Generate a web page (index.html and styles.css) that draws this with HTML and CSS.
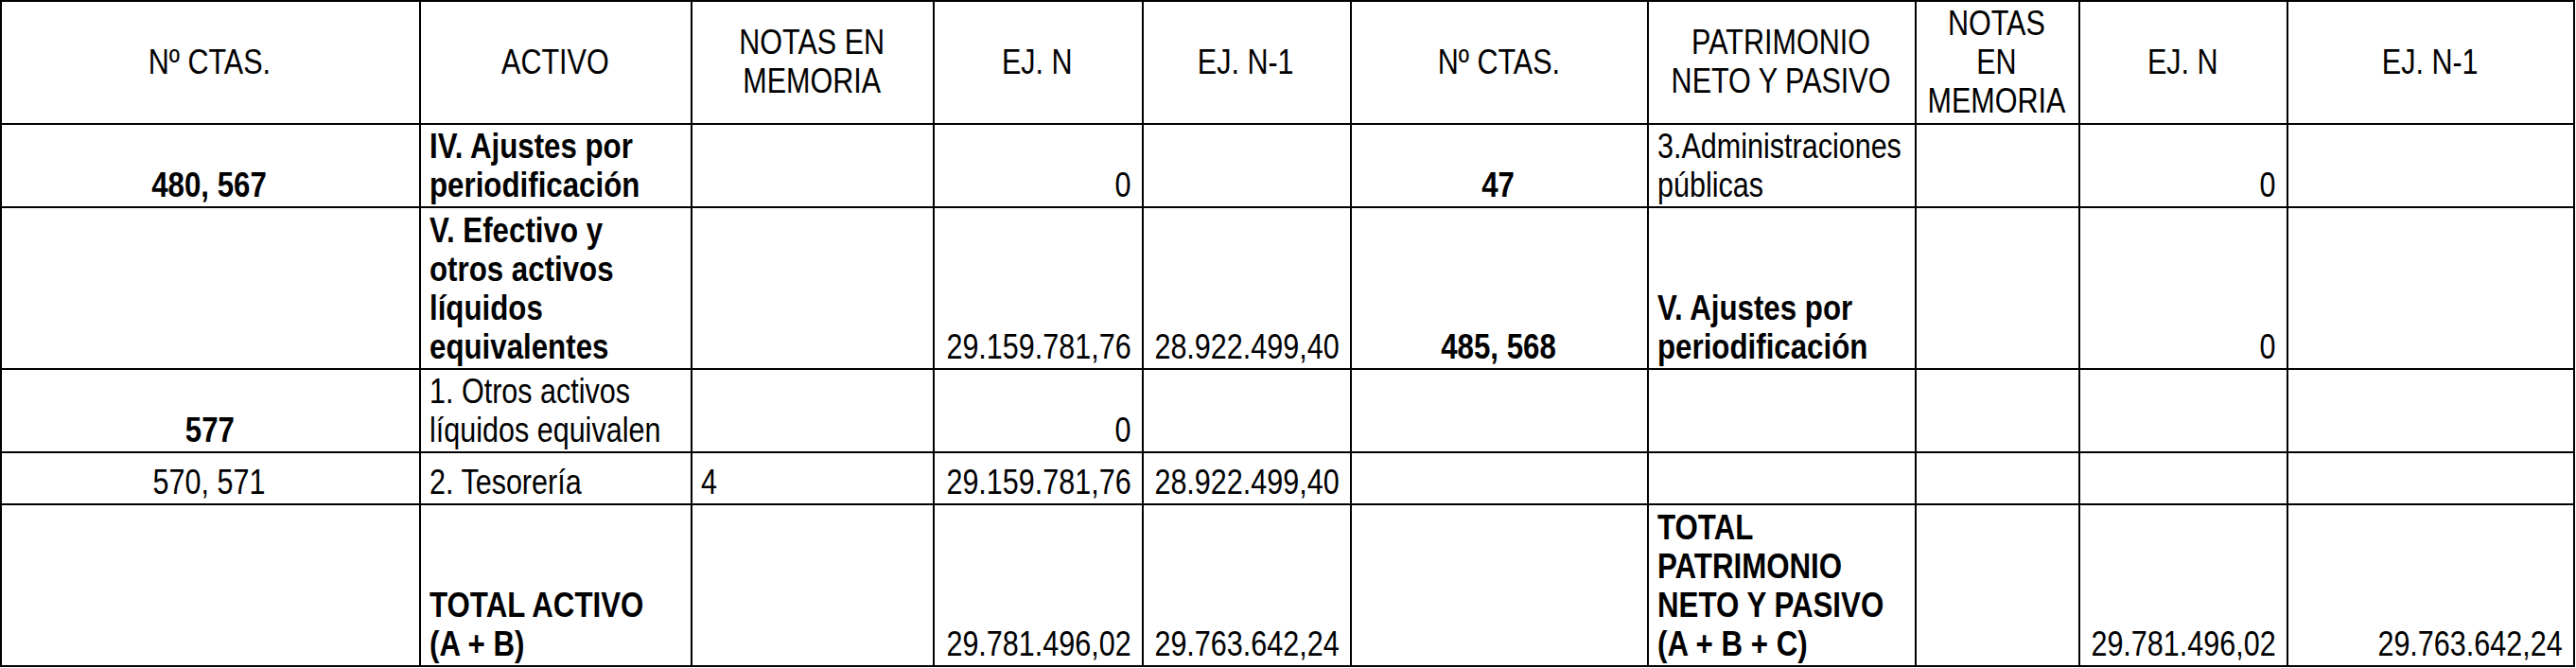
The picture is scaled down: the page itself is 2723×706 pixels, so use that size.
FILE: index.html
```html
<!DOCTYPE html>
<html lang="es">
<head>
<meta charset="utf-8">
<title>Balance</title>
<link rel="stylesheet" href="styles.css">
</head>
<body>
<table class="sheet">
  <colgroup>
    <col class="w-ctas-a">
    <col class="w-activo">
    <col class="w-notas-a">
    <col class="w-ejn-a">
    <col class="w-ejn1-a">
    <col class="w-ctas-p">
    <col class="w-pasivo">
    <col class="w-notas-p">
    <col class="w-ejn-p">
    <col class="w-ejn1-p">
  </colgroup>
  <thead>
    <tr class="r-head">
      <th><div class="cell c"><span class="t">Nº CTAS.</span></div></th>
      <th><div class="cell c"><span class="t">ACTIVO</span></div></th>
      <th><div class="cell c"><span class="t">NOTAS EN<br>MEMORIA</span></div></th>
      <th><div class="cell c"><span class="t">EJ. N</span></div></th>
      <th><div class="cell c"><span class="t">EJ. N-1</span></div></th>
      <th><div class="cell c"><span class="t">Nº CTAS.</span></div></th>
      <th><div class="cell c"><span class="t">PATRIMONIO<br>NETO Y PASIVO</span></div></th>
      <th><div class="cell c"><span class="t">NOTAS<br>EN<br>MEMORIA</span></div></th>
      <th><div class="cell c"><span class="t">EJ. N</span></div></th>
      <th><div class="cell c"><span class="t">EJ. N-1</span></div></th>
    </tr>
  </thead>
  <tbody>
    <tr class="r-1">
      <td><div class="cell c b"><span class="t">480, 567</span></div></td>
      <td><div class="cell l b"><span class="t">IV. Ajustes por<br>periodificación</span></div></td>
      <td></td>
      <td><div class="cell r"><span class="t">0</span></div></td>
      <td></td>
      <td><div class="cell c b"><span class="t">47</span></div></td>
      <td><div class="cell l"><span class="t">3.Administraciones<br>públicas</span></div></td>
      <td></td>
      <td><div class="cell r"><span class="t">0</span></div></td>
      <td></td>
    </tr>
    <tr class="r-2">
      <td></td>
      <td><div class="cell l b"><span class="t">V. Efectivo y<br>otros activos<br>líquidos<br>equivalentes</span></div></td>
      <td></td>
      <td><div class="cell r"><span class="t">29.159.781,76</span></div></td>
      <td><div class="cell r"><span class="t">28.922.499,40</span></div></td>
      <td><div class="cell c b"><span class="t">485, 568</span></div></td>
      <td><div class="cell l b"><span class="t">V. Ajustes por<br>periodificación</span></div></td>
      <td></td>
      <td><div class="cell r"><span class="t">0</span></div></td>
      <td></td>
    </tr>
    <tr class="r-3">
      <td><div class="cell c b"><span class="t">577</span></div></td>
      <td><div class="cell l"><span class="t">1. Otros activos<br>líquidos equivalen</span></div></td>
      <td></td>
      <td><div class="cell r"><span class="t">0</span></div></td>
      <td></td>
      <td></td>
      <td></td>
      <td></td>
      <td></td>
      <td></td>
    </tr>
    <tr class="r-4">
      <td><div class="cell c"><span class="t">570, 571</span></div></td>
      <td><div class="cell l"><span class="t">2. Tesorería</span></div></td>
      <td><div class="cell l"><span class="t">4</span></div></td>
      <td><div class="cell r"><span class="t">29.159.781,76</span></div></td>
      <td><div class="cell r"><span class="t">28.922.499,40</span></div></td>
      <td></td>
      <td></td>
      <td></td>
      <td></td>
      <td></td>
    </tr>
    <tr class="r-5">
      <td></td>
      <td><div class="cell l b"><span class="t">TOTAL ACTIVO<br>(A + B)</span></div></td>
      <td></td>
      <td><div class="cell r"><span class="t">29.781.496,02</span></div></td>
      <td><div class="cell r"><span class="t">29.763.642,24</span></div></td>
      <td></td>
      <td><div class="cell l b"><span class="t">TOTAL<br>PATRIMONIO<br>NETO Y PASIVO<br>(A + B + C)</span></div></td>
      <td></td>
      <td><div class="cell r"><span class="t">29.781.496,02</span></div></td>
      <td><div class="cell r"><span class="t">29.763.642,24</span></div></td>
    </tr>
  </tbody>
</table>
</body>
</html>
```
FILE: styles.css
```css
html, body {
  margin: 0;
  padding: 0;
  background: #ffffff;
}

.sheet {
  border-collapse: collapse;
  table-layout: fixed;
  width: 2722px;
  font-family: "Liberation Sans", Arial, sans-serif;
  font-size: 37px;
  line-height: 41px;
  color: #000000;
  border: 2px solid #3a3a3a;
}

.w-ctas-a { width: 443px; }
.w-activo { width: 287px; }
.w-notas-a { width: 256px; }
.w-ejn-a { width: 221px; }
.w-ejn1-a { width: 220px; }
.w-ctas-p { width: 314px; }
.w-pasivo { width: 283px; }
.w-notas-p { width: 173px; }
.w-ejn-p { width: 220px; }
.w-ejn1-p { width: 303px; }

.sheet th,
.sheet td {
  border: 2px solid #000000;
  padding: 0 11px 2px 9px;
  white-space: nowrap;
}

.sheet th {
  font-weight: normal;
  vertical-align: middle;
}

.sheet td {
  vertical-align: bottom;
}

.r-head { height: 130px; }
.r-1 { height: 88px; }
.r-2 { height: 171px; }
.r-3 { height: 88px; }
.r-4 { height: 55px; }
.r-5 { height: 171px; }

/* Arial Narrow look: Liberation Sans compressed horizontally */
.cell {
  display: flex;
  width: 100%;
}

.cell .t {
  display: inline-block;
  flex: 0 0 auto;
  transform: scaleX(0.825);
}

.cell.b .t {
  transform: scaleX(0.845);
}

.cell.l { justify-content: flex-start; }
.cell.l .t { transform-origin: left center; text-align: left; }

.cell.r { justify-content: flex-end; }
.cell.r .t { transform-origin: right center; text-align: right; }

.cell.c { justify-content: center; }
.cell.c .t { transform-origin: center center; text-align: center; }

.b { font-weight: bold; }
```
